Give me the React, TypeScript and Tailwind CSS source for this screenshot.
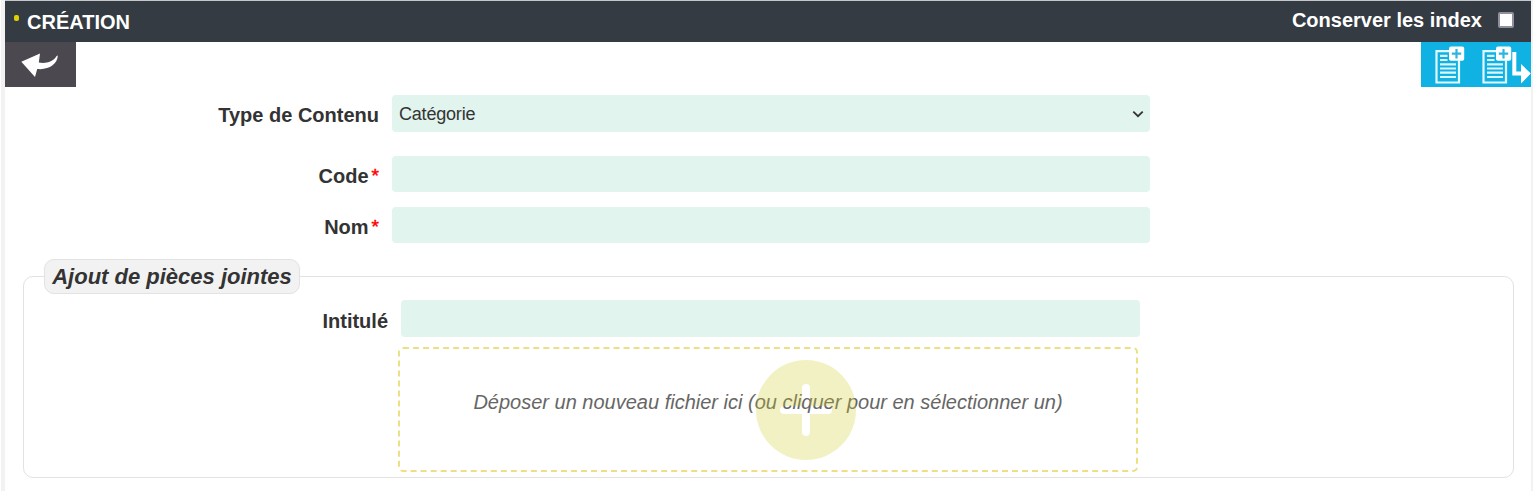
import React from "react";

function BackArrow() {
  return (
    <svg width="38" height="26" viewBox="0 0 38 26" fill="#fff" aria-hidden="true">
      <path d="M0.3 8.8 L19 0.4 L17.8 9.6 C25 10.8 32 9 35.6 3 L36.8 2.6 C36.5 11.5 27.5 17.2 16.2 16 L14 24 Z" />
    </svg>
  );
}

function DocumentAdd() {
  return (
    <svg width="30" height="39" viewBox="0 0 30 39" aria-hidden="true">
      <path d="M15 5.2 H1.5 V36.5 H24 V14.5" fill="none" stroke="#e3f8fd" strokeWidth="2.2" />
      <path d="M5 9.8 h7.5 M5 14 h7.5 M5 18.3 h16 M5 22.5 h16 M5 26.7 h16 M5 31 h16" stroke="#dcf5fc" strokeWidth="2.2" />
      <path d="M16 0.5 H27.3 Q29.2 0.5 29.2 2.4 V13 Q29.2 14.8 27.3 14.8 H16 Q14 14.8 14 13 V2.4 Q14 0.5 16 0.5 Z" fill="#fff" />
      <path d="M21.5 3 V12.4 M16.8 7.7 H26.2" stroke="#2eb5df" strokeWidth="2.2" />
    </svg>
  );
}

function NextArrow() {
  return (
    <svg width="19" height="32" viewBox="0 0 19 32" aria-hidden="true">
      <path d="M2.3 0 V21.5 H10" fill="none" stroke="#fff" strokeWidth="4" />
      <path d="M9 12 L18.8 21.5 L9 31.5 Z" fill="#fff" />
    </svg>
  );
}

function Field({ label, required = false, className = "" }: { label: string; required?: boolean; className?: string }) {
  return (
    <div className={"flex h-9 " + className}>
      <label className="w-[374px] pt-[5px] text-right text-[20px] leading-[30px] font-bold">
        {label}
        {required && <span className="relative -top-px ml-[3px] text-[19px] leading-none font-normal text-[#ff0000] [-webkit-text-stroke:0.5px_#ff0000]">*</span>}
      </label>
      <input aria-label={label} className="ml-[13px] h-full w-[758px] rounded-[4px] bg-[#e1f4ed] px-2 outline-none" />
    </div>
  );
}

export default function App() {
  return (
    <div className="flex h-[491px] w-[1533px] bg-white pl-px font-['Liberation_Sans',sans-serif] text-[#333]">
      <div className="w-1 bg-[#f2f2f2]" />
      <main className="w-[1526px]">
        <header className="flex h-[42px] border-t border-[#c4c8cb] bg-[#353b42] text-[20px] font-bold text-white">
          <span className="mt-[14px] ml-[9px] h-[6px] w-[5px] rounded-[2px] bg-[#dfd000]" />
          <h1 className="ml-2 pt-[6px] leading-[30px]">CRÉATION</h1>
          <label className="ml-auto flex pr-[17px]">
            <span className="pt-[4px] leading-[30px]">Conserver les index</span>
            <input type="checkbox" className="mt-[11px] ml-[16px] size-4 appearance-none rounded-[2px] border-2 border-[#8f8f9d] bg-white" />
          </label>
        </header>
        <nav className="flex h-[45px] justify-between">
          <button aria-label="Retour" className="flex w-[71px] bg-[#4c4850] pt-[11px] pl-4">
            <BackArrow />
          </button>
          <div className="flex w-[110px] bg-[#10b2e3] pt-1 pl-[14px]">
            <button aria-label="Ajouter" className="block h-[39px]"><DocumentAdd /></button>
            <button aria-label="Ajouter et continuer" className="ml-[17px] flex h-[39px]">
              <DocumentAdd />
              <span className="pt-[6px]"><NextArrow /></span>
            </button>
          </div>
        </nav>

        <div className="flex h-[45px] pt-2">
          <label className="w-[374px] pt-[5px] text-right text-[20px] leading-[30px] font-bold">Type de Contenu</label>
          <button className="ml-[13px] flex h-[37px] w-[758px] items-center justify-between rounded-[4px] bg-[#e1f4ed] pr-[6px] pl-[7px] text-[18px] tracking-[-0.2px]">
            <span className="pt-[2px]">Catégorie</span>
            <svg width="12" height="8" viewBox="0 0 12 8" fill="none" stroke="#333" strokeWidth="1.8" aria-hidden="true">
              <path d="M1.3 1.6 L6 6.2 L10.7 1.6" />
            </svg>
          </button>
        </div>
        <Field label="Code" required className="mt-6" />
        <Field label="Nom" required className="mt-[15px]" />

        <section className="mt-[33px] ml-[18px] h-[202px] w-[1491px] rounded-[10px] border border-[#e4e1e3]">
          <h2 className="-mt-[18px] ml-5 flex h-[35px] w-[256px] items-center justify-center rounded-[10px] border border-[#e2e2e2] bg-[#f2f2f2] text-[22px] font-bold whitespace-nowrap italic">
            Ajout de pièces jointes
          </h2>
          <div className="mt-[6px] flex h-[37px]">
            <label className="w-[364px] pt-[6px] text-right text-[20px] leading-[30px] font-bold">Intitulé</label>
            <input aria-label="Intitulé" className="ml-[13px] h-full w-[739px] rounded-[4px] bg-[#e1f4ed] px-2 outline-none" />
          </div>
          <div className="relative mt-[10px] ml-[374px] h-[125px] w-[740px] rounded-[5px] border-2 border-dashed border-[#eddf85]">
            <p className="pt-[38px] text-center text-[20px] leading-[30px] text-[#666] italic">
              Déposer un nouveau fichier ici (ou cliquer pour en sélectionner un)
            </p>
            <svg className="absolute top-[11px] left-[356px] opacity-[.27]" width="100" height="100" viewBox="0 0 100 100" aria-hidden="true">
              <path
                fillRule="evenodd"
                fill="#d2cf28"
                d="M50 0 A50 50 0 0 1 50 100 A50 50 0 0 1 50 0 Z M46 28 V46 H28 A4 4 0 0 0 28 54 H46 V72 A4 4 0 0 0 54 72 V54 H72 A4 4 0 0 0 72 46 H54 V28 A4 4 0 0 0 46 28 Z"
              />
            </svg>
          </div>
        </section>
      </main>
      <div className="w-[2px] bg-[#f2f2f2]" />
    </div>
  );
}
